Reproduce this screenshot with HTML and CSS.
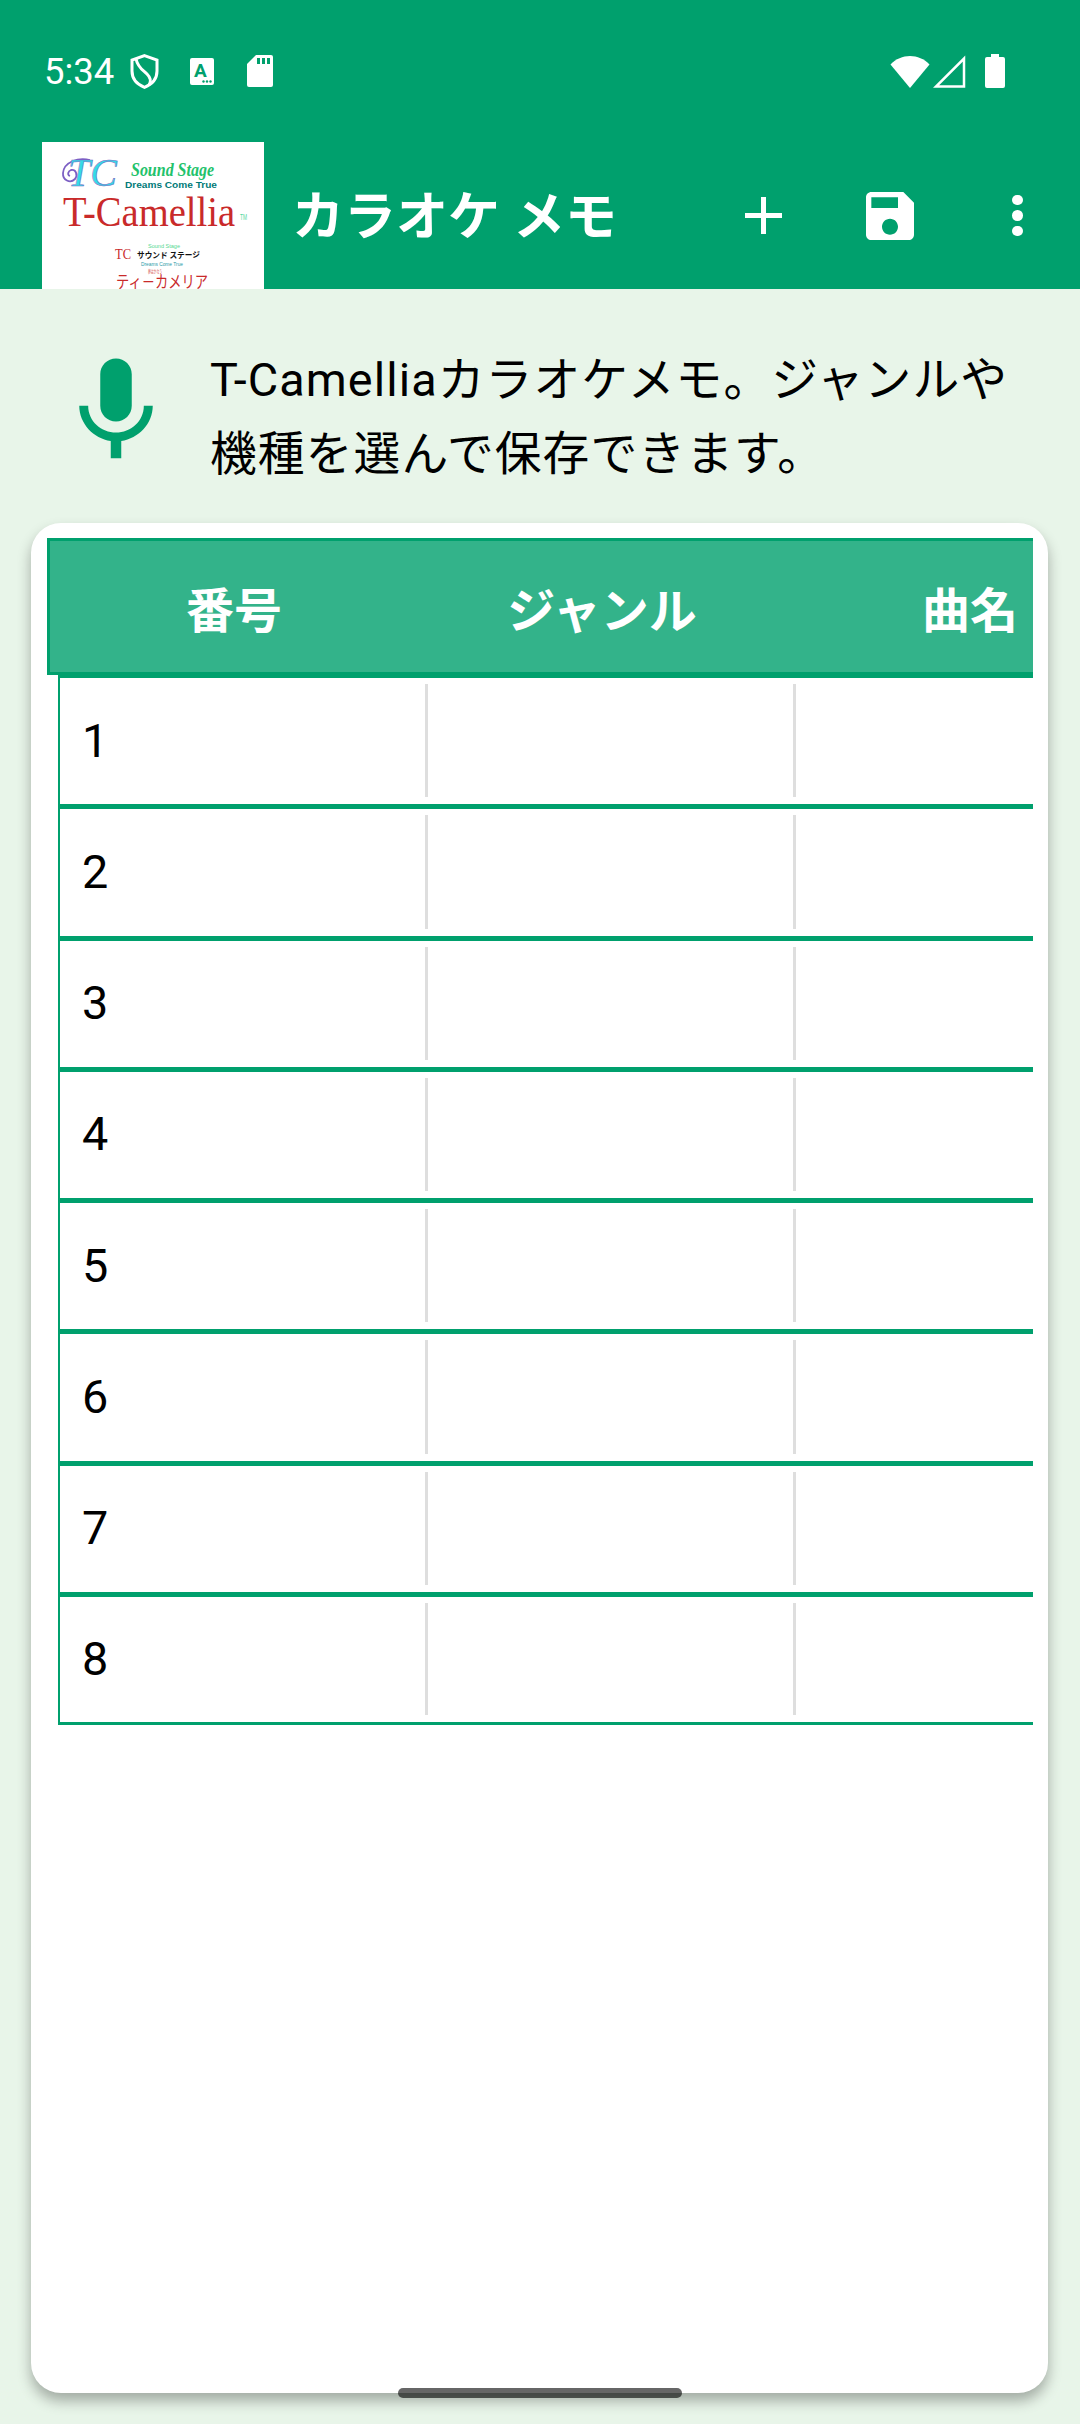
FILE: index.html

```html
<!DOCTYPE html>
<html lang="ja">
<head>
<meta charset="UTF-8">
<meta name="viewport" content="width=device-width, initial-scale=1.0">
<title>カラオケ メモ</title>
<link rel="stylesheet" href="styles.css">
</head>
<body>

<div class="app-header">
    <div class="status-bar">
        <div class="status-left">
            <span class="clock">5:34</span>
            <svg class="icon-shield" width="29" height="35" viewBox="0 0 29 35" fill="none" stroke="#fff" stroke-width="3">
                <path d="M14.5 1.7L27 6v11c0 8-5.6 13.6-12.5 16.3C7.600 30.600 2 25 2 17V6z"/>
                <path d="M6 5c2 9 7 11 11 15 4 4 4 8 2 11"/>
            </svg>
            <svg class="icon-a" width="24" height="27" viewBox="0 0 24 27">
                <rect width="24" height="27" rx="2" fill="#fff"/>
                <text x="10.500" y="19" class="icon-a-letter">A</text>
                <circle cx="13.500" cy="23.500" r="1.200" fill="#00a06d"/>
                <circle cx="17" cy="23.500" r="1.200" fill="#00a06d"/>
                <circle cx="20.500" cy="23.500" r="1.200" fill="#00a06d"/>
            </svg>
            <svg class="icon-sd" width="26" height="32" viewBox="0 0 26 32">
                <path d="M9 0h15a2 2 0 0 1 2 2v28a2 2 0 0 1-2 2H2a2 2 0 0 1-2-2V9z" fill="#fff"/>
                <path d="M10 3h3v6h-3zM15 3h3v6h-3zM20 3h3v6h-3z" fill="#00a06d"/>
            </svg>
        </div>
        <div class="status-right">
            <svg width="40" height="33" viewBox="0 0 40 33"><path d="M0.500 9.500C11-2 29-2 39.500 9.500L20 33z" fill="#fff"/></svg>
            <svg class="icon-signal" width="33" height="33" viewBox="0 0 33 33" fill="none" stroke="#fff" stroke-width="2.500"><path d="M31 3.500V31.500H3z"/></svg>
            <svg class="icon-battery" width="20" height="34" viewBox="0 0 20 34">
                <path d="M6 0h8v3h4a2 2 0 0 1 2 2v27a2 2 0 0 1-2 2H2a2 2 0 0 1-2-2V5a2 2 0 0 1 2-2h4z" fill="#fff"/>
            </svg>
        </div>
    </div>

    <div class="toolbar">
        <!-- app logo, rebuilt from text -->
        <svg class="logo" width="222" height="147" viewBox="0 0 222 147">
            <rect width="222" height="147" fill="#fff"/>
            <path class="logo-swirl" d="M48 18C36 15 22 20 21 31c-.5 7 7 11 12 6 3-4 1-10-4-9-3 1-4 5-1 6"/>
            <text x="26" y="44" class="logo-tc" textLength="49" lengthAdjust="spacingAndGlyphs">TC</text>
            <text x="89" y="34" class="logo-sound" textLength="83" lengthAdjust="spacingAndGlyphs">Sound Stage</text>
            <text x="83" y="46" class="logo-dreams" textLength="92" lengthAdjust="spacingAndGlyphs">Dreams Come True</text>
            <text x="21" y="84" class="logo-name" textLength="172" lengthAdjust="spacingAndGlyphs">T-Camellia</text>
            <text x="198" y="78" class="logo-tm" textLength="7" lengthAdjust="spacingAndGlyphs">TM</text>
            <text x="106" y="106" class="logo-small-green" textLength="32" lengthAdjust="spacingAndGlyphs">Sound Stage</text>
            <text x="73" y="117" class="logo-small-tc" textLength="16" lengthAdjust="spacingAndGlyphs">TC</text>
            <text x="95" y="116" class="logo-kana" textLength="63" lengthAdjust="spacingAndGlyphs">サウンド ステージ</text>
            <text x="99" y="124" class="logo-small-teal" textLength="42" lengthAdjust="spacingAndGlyphs">Dreams Come True</text>
            <text x="106" y="131" class="logo-small-red" textLength="14" lengthAdjust="spacingAndGlyphs">夢はかなう</text>
            <text x="74" y="146" class="logo-katakana" textLength="92" lengthAdjust="spacingAndGlyphs">ティ－カメリア</text>
        </svg>
        <h1 class="app-title">カラオケ メモ</h1>
        <svg class="action-add" width="37" height="37" viewBox="0 0 37 37"><path d="M16 0h5v16h16v5H21v16h-5V21H0v-5h16z" fill="#fff"/></svg>
        <svg class="action-save" width="64" height="64" viewBox="0 0 24 24"><path d="M17 3H5c-1.110 0-2 .9-2 2v14c0 1.100.89 2 2 2h14c1.100 0 2-.9 2-2V7l-4-4zm-5 16c-1.660 0-3-1.340-3-3s1.340-3 3-3 3 1.340 3 3-1.340 3-3 3zm3-10H5V5h10v4z" fill="#fff"/></svg>
        <div class="action-more"><span></span><span></span><span></span></div>
    </div>
</div>

<div class="intro">
    <svg class="intro-mic" width="126" height="126" viewBox="0 0 24 24"><path d="M12 14c1.660 0 3-1.340 3-3V5c0-1.660-1.340-3-3-3S9 3.340 9 5v6c0 1.660 1.340 3 3 3zm5.300-3c0 3-2.540 5.100-5.300 5.100S6.700 14 6.700 11H5c0 3.410 2.720 6.230 6 6.720V21h2v-3.280c3.280-.48 6-3.300 6-6.720h-1.700z" fill="#00a06d"/></svg>
    <p class="intro-text">T-Camelliaカラオケメモ。ジャンルや機種を選んで保存できます。</p>
</div>

<div class="card">
    <div class="memo-table">
        <div class="head-row">
            <div class="head-cell">番号</div>
            <div class="head-cell">ジャンル</div>
            <div class="head-cell">曲名</div>
        </div>
        <div class="row"><div class="cell">1</div><div class="cell"></div><div class="cell"></div></div>
        <div class="row"><div class="cell">2</div><div class="cell"></div><div class="cell"></div></div>
        <div class="row"><div class="cell">3</div><div class="cell"></div><div class="cell"></div></div>
        <div class="row"><div class="cell">4</div><div class="cell"></div><div class="cell"></div></div>
        <div class="row"><div class="cell">5</div><div class="cell"></div><div class="cell"></div></div>
        <div class="row"><div class="cell">6</div><div class="cell"></div><div class="cell"></div></div>
        <div class="row"><div class="cell">7</div><div class="cell"></div><div class="cell"></div></div>
        <div class="row row-last"><div class="cell">8</div><div class="cell"></div><div class="cell"></div></div>
    </div>
</div>

<div class="home-pill"></div>

</body>
</html>
```

FILE: styles.css

```css
* {
    box-sizing: border-box;
}
html, body {
    margin: 0;
    padding: 0;
}
body {
    position: relative;
    width: 1080px;
    height: 2424px;
    overflow: hidden;
    background-color: #e8f5e9;
    font-family: Roboto, "Noto Sans CJK JP", sans-serif;
    color: #000;
}

/* header */
.app-header {
    height: 289px;
    background-color: #00a06d;
    color: #fff;
}
.status-bar {
    height: 142px;
    display: flex;
    justify-content: space-between;
    align-items: center;
    padding: 0 75px 0 44px;
}
.status-left, .status-right {
    display: flex;
    align-items: center;
}
.clock {
    font-size: 36.500px;
    width: 86px;
}
.icon-a {
    margin-left: 31px;
}
.icon-a-letter {
    font-family: Roboto, sans-serif;
    font-size: 19px;
    font-weight: 700;
    fill: #00a06d;
    text-anchor: middle;
}
.icon-sd {
    margin-left: 33px;
}
.icon-signal {
    margin-left: 3px;
}
.icon-battery {
    margin-left: 19px;
}

.toolbar {
    height: 147px;
    display: flex;
    align-items: center;
    padding-left: 42px;
}
.logo {
    flex-shrink: 0;
}
.logo-swirl {
    fill: none;
    stroke: #7c5fc4;
    stroke-width: 1.800;
}
.logo-tc {
    font-family: "Liberation Serif", serif;
    font-style: italic;
    font-size: 40px;
    fill: #35dbe6;
    stroke: #7c5fc4;
    stroke-width: 0.500;
}
.logo-sound {
    font-family: "Liberation Serif", serif;
    font-style: italic;
    font-weight: 700;
    font-size: 18px;
    fill: #22c26b;
}
.logo-dreams {
    font-family: "Liberation Sans", sans-serif;
    font-weight: 700;
    font-size: 9px;
    fill: #007a78;
}
.logo-name {
    font-family: "Liberation Serif", serif;
    font-size: 42px;
    fill: #c92a2a;
}
.logo-tm {
    font-family: "Liberation Sans", sans-serif;
    font-size: 9px;
    fill: #55d8a0;
}
.logo-small-green {
    font-family: "Liberation Sans", sans-serif;
    font-size: 6px;
    fill: #55d890;
}
.logo-small-tc {
    font-family: "Liberation Serif", serif;
    font-size: 15px;
    fill: #c92a2a;
}
.logo-kana {
    font-family: "Noto Sans CJK JP", sans-serif;
    font-size: 8px;
    font-weight: 700;
    fill: #111;
}
.logo-small-teal {
    font-family: "Liberation Sans", sans-serif;
    font-size: 5px;
    fill: #2a9aa8;
}
.logo-small-red {
    font-family: "Noto Sans CJK JP", sans-serif;
    font-size: 5px;
    fill: #d03a3a;
}
.logo-katakana {
    font-family: "Noto Sans CJK JP", sans-serif;
    font-size: 17px;
    fill: #c92a2a;
}
.app-title {
    margin: -6px 0 0 28px;
    width: 453px;
    font-size: 52px;
    font-weight: 700;
    white-space: nowrap;
}
.action-add {
    flex-shrink: 0;
}
.action-save {
    flex-shrink: 0;
    margin-left: 76px;
}
.action-more {
    display: flex;
    flex-direction: column;
    gap: 5px;
    margin-left: 90px;
}
.action-more span {
    width: 10.500px;
    height: 10.500px;
    border-radius: 50%;
    background-color: #fff;
}

/* intro line */
.intro {
    height: 234px;
    display: flex;
    align-items: flex-start;
    padding: 54px 60px 0 53px;
}
.intro-mic {
    flex-shrink: 0;
    margin-top: 5px;
}
.intro-text {
    margin: 0 0 0 31px;
    font-size: 46.750px;
    letter-spacing: 1.100px;
    line-height: 74px;
}

/* table card */
.card {
    width: 1017px;
    height: 1870px;
    margin-left: 31px;
    padding: 15px 15px 0 16px;
    background-color: #fff;
    border-radius: 30px;
    box-shadow: 0 8px 14px rgba(0, 0, 0, 0.3);
}
.memo-table {
    overflow: hidden;
}
.head-row {
    display: flex;
    height: 137px;
    background-color: #33b38a;
    border: solid #00a06d;
    border-width: 3px 0 3px 3px;
}
.head-cell {
    flex: 0 0 368px;
    display: flex;
    align-items: center;
    justify-content: center;
    color: #fff;
    font-size: 48px;
    font-weight: 700;
}
.row {
    display: flex;
    height: 131.250px;
    margin-left: 11px;
    padding: 6px 0 7px;
    border: solid #00a06d;
    border-width: 3px 0 2px 2px;
}
.row-last {
    border-bottom-width: 3px;
}
.cell {
    flex: 0 0 368px;
    display: flex;
    align-items: center;
    padding-left: 22px;
    border-right: 3px solid #dedede;
    font-size: 46.750px;
}

.home-pill {
    position: absolute;
    left: 398px;
    top: 2388px;
    width: 284px;
    height: 10px;
    border-radius: 5px;
    background-color: rgba(0, 0, 0, 0.6);
}
```
